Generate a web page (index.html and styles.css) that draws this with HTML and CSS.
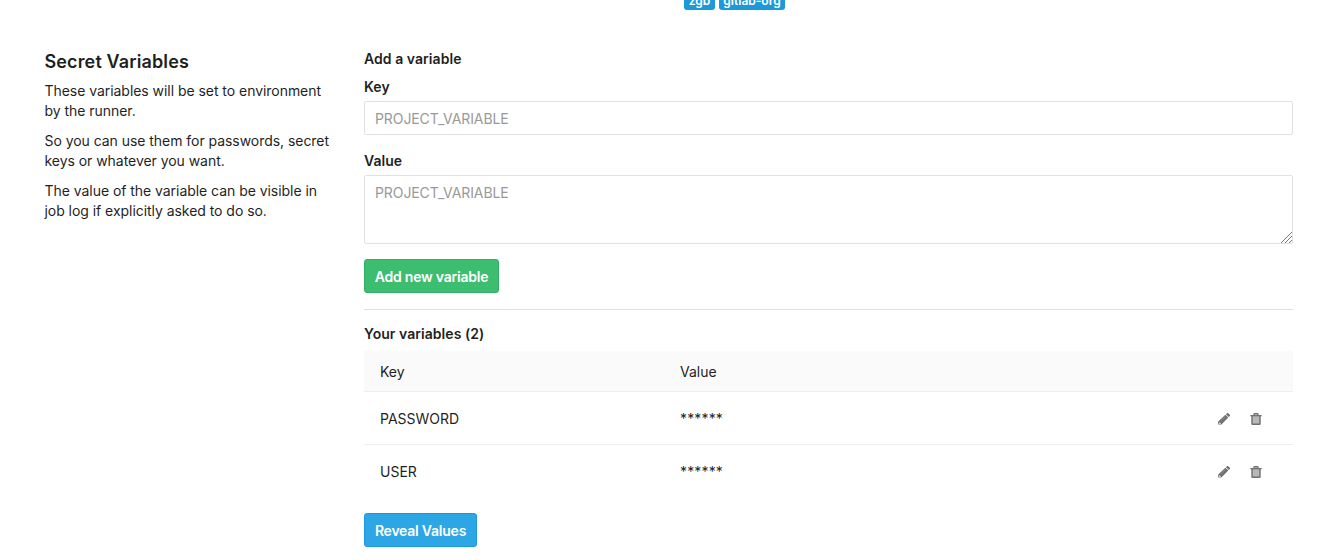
FILE: index.html
```html
<!DOCTYPE html>
<html lang="en">
<head>
<meta charset="utf-8">
<title>Secret Variables</title>
<link rel="stylesheet" href="styles.css">
</head>
<body>
<svg class="sprite" aria-hidden="true">
  <symbol id="pencil" viewBox="0 0 12 12">
    <path fill="#707070" fill-rule="evenodd" d="M7.900 1.200 8.700.4c.6-.5 1.200-.5 1.800 0l1.100 1.100c.5.600.5 1.200 0 1.800l-.8.800zM7.400 1.700l2.900 2.900-6.900 7H.2V8.500zM1.500 9.300l-.5.500v.6h.8v.7h.5l.6-.6z"/>
    <path stroke="#a8a8a8" stroke-width=".5" d="M7.400 3.500 3.200 7.700"/>
  </symbol>
  <symbol id="trash" viewBox="0 0 12 12">
    <path fill="#b8b8b8" d="M2 3h8v8H2z"/>
    <path fill="none" stroke="#707070" stroke-width="1.400" d="M2 2.500v8.200q0 .6.6.6h6.800q.6 0 .6-.6V2.500M3.900 2l.4-1.200h3.400L8.100 2"/>
    <path fill="#707070" d="M.4 2h11.200v1.300H.4z"/>
  </symbol>
</svg>
<div class="badges"><span class="badge badge-user">zgb</span><span class="badge badge-group">gitlab-org</span></div>
<main class="settings">
  <aside class="intro">
    <h4 class="intro-title">Secret Variables</h4>
    <p>These variables will be set to environment<br>by the runner.</p>
    <p>So you can use them for passwords, secret<br>keys or whatever you want.</p>
    <p>The value of the variable can be visible in<br>job log if explicitly asked to do so.</p>
  </aside>
  <section class="content">
    <h5 class="heading">Add a variable</h5>
    <form>
      <label class="label" for="key">Key</label>
      <input class="control" id="key" type="text" placeholder="PROJECT_VARIABLE">
      <label class="label" for="value">Value</label>
      <div class="area-wrap">
        <textarea class="control area" id="value" placeholder="PROJECT_VARIABLE"></textarea>
        <svg class="grip" viewBox="0 0 11 11"><path fill="none" stroke="#777" stroke-width="1" d="M0 11 11 0M4 11l7-7M8 11l3-3"/></svg>
      </div>
      <button class="btn btn-add" type="button">Add new variable</button>
    </form>
    <hr class="divider">
    <h5 class="heading list-heading">Your variables (2)</h5>
    <div class="table">
      <div class="row head"><span>Key</span><span>Value</span></div>
      <div class="row"><span>PASSWORD</span><span class="mask">******</span>
        <span class="actions"><svg class="icon"><use href="#pencil"/></svg><svg class="icon"><use href="#trash"/></svg></span></div>
      <div class="row last"><span>USER</span><span class="mask">******</span>
        <span class="actions"><svg class="icon"><use href="#pencil"/></svg><svg class="icon"><use href="#trash"/></svg></span></div>
    </div>
    <button class="btn btn-reveal" type="button">Reveal Values</button>
  </section>
</main>
</body>
</html>
```
FILE: styles.css
```css
* { box-sizing: border-box; }
body {
  margin: 0;
  height: 560px;
  overflow: hidden;
  background: #fff;
  color: #1f1f1f;
  font: 14px/20px Inter, "Liberation Sans", sans-serif;
}
h4, h5, p { margin: 0; }
.sprite { display: none; }
.badges {
  display: flex;
  gap: 4px;
  height: 10px;
  padding-left: 684px;
  align-items: flex-end;
}
.badge {
  height: 20px;
  border-radius: 3px;
  background: #1b99d9;
  color: #fff;
  text-align: center;
  font-size: 12px;
  line-height: 21px;
  font-weight: 600;
}
.badge-user { width: 31px; }
.badge-group { width: 66px; }
.settings {
  display: grid;
  grid-template-columns: 288px 929px;
  column-gap: 32px;
  padding: 39px 0 0 44px;
}
.intro { padding-left: .5px; letter-spacing: -.045px; }
.intro-title {
  margin: 1px 0 7px;
  font-size: 18px;
  line-height: 24px;
  font-weight: 600;
  letter-spacing: .13px;
}
.intro p { margin-bottom: 10px; white-space: nowrap; }
.heading, .label {
  display: block;
  font-size: 14px;
  font-weight: 600;
  line-height: 20px;
  letter-spacing: .05px;
}
.heading { margin-bottom: 8px; }
.control {
  display: block;
  width: 100%;
  height: 34px;
  margin: 4px 0 16px;
  padding: 6px 10px;
  border: 1px solid #e1e1e1;
  border-radius: 2px;
  background: #fff;
  font: inherit;
  letter-spacing: -.09px;
  outline: 0;
}
.control::placeholder { color: #999; opacity: 1; }
.area-wrap { position: relative; margin-bottom: 15px; }
.area { height: 69px; margin-bottom: 0; padding-top: 7px; resize: none; overflow: hidden; }
.grip { position: absolute; right: 1px; bottom: 1px; width: 11px; height: 11px; }
.btn {
  display: block;
  height: 34px;
  padding: 1px 0 0;
  border: 1px solid;
  border-radius: 3px;
  color: #fff;
  font: 600 14px/20px Inter, "Liberation Sans", sans-serif;
  letter-spacing: -.23px;
  white-space: nowrap;
}
.btn-add { width: 135px; background: #3cbd70; border-color: #31af64; }
.btn-reveal { width: 113px; margin-top: 16px; background: #2da6e6; border-color: #1b99dc; }
.divider { margin: 16px 0 14px; border: 0; border-top: 1px solid #dfdfdf; }
.list-heading { margin-bottom: 7px; }
.row {
  display: grid;
  grid-template-columns: 300px 1fr auto;
  align-items: center;
  height: 53px;
  padding: 2px 31px 0 16px;
  border-bottom: 1px solid #eee;
}
.head { height: 41px; background: #fafafa; }
.last { height: 52px; border-bottom: 0; }
.mask { letter-spacing: .15px; }
.actions { display: flex; gap: 20px; }
.icon { display: block; width: 12px; height: 12px; }
```
